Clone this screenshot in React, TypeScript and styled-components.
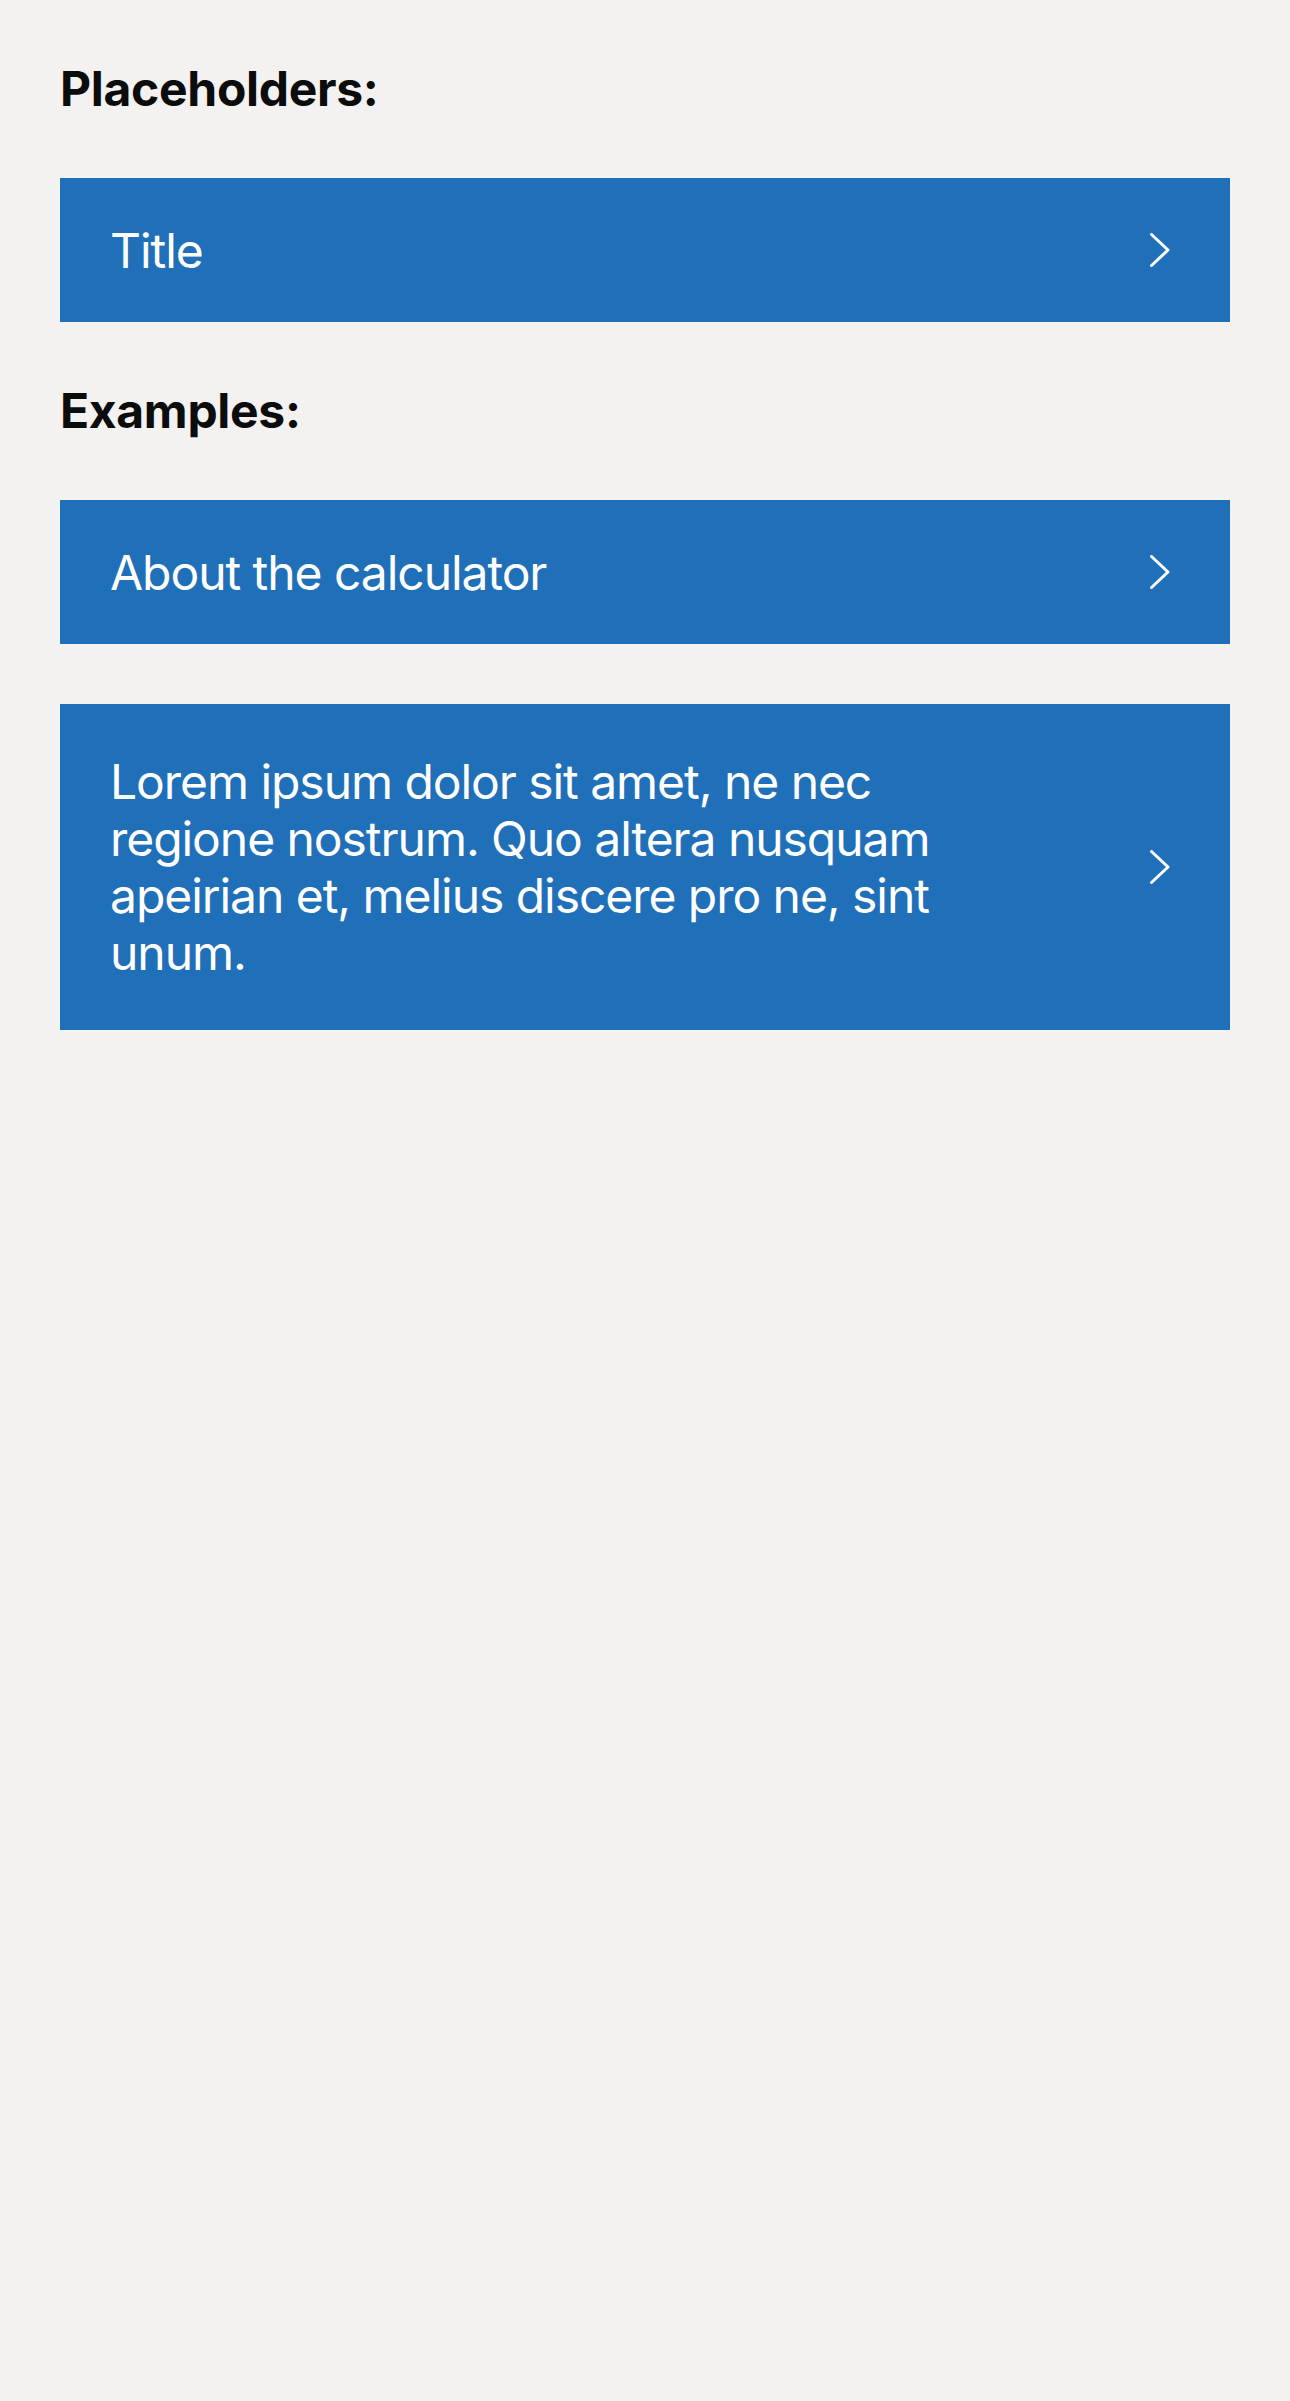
import React from "react";
import styled, { createGlobalStyle } from "styled-components";

const GlobalStyle = createGlobalStyle`
  html, body {
    margin: 0;
    padding: 0;
    background: #f3f2f1;
  }
  body {
    font-family: Inter, "Noto Sans", "Liberation Sans", sans-serif;
    -webkit-font-smoothing: antialiased;
  }
`;

const Page = styled.main`
  display: flex;
  flex-direction: column;
  gap: 60px;
  padding: 60px 60px;
  min-height: 2401px;
  box-sizing: border-box;
  background: #f3f2f1;
`;

const Heading = styled.h2`
  margin: 0;
  font-family: Inter, "Liberation Sans", sans-serif;
  font-size: 48px;
  line-height: 58px;
  font-weight: 700;
  letter-spacing: -0.3px;
  color: #0b0c0c;
`;

const Card = styled.a`
  display: flex;
  align-items: center;
  justify-content: space-between;
  gap: 40px;
  box-sizing: border-box;
  padding: 43.5px 60px 43.5px 50px;
  background: #1f70b8;
  color: #ffffff;
  text-decoration: none;
  cursor: pointer;
`;

const CardText = styled.span<{ $maxWidth?: number; $multiline?: boolean }>`
  flex: 0 1 auto;
  max-width: ${(p) => (p.$maxWidth ? `${p.$maxWidth}px` : "none")};
  padding: ${(p) => (p.$multiline ? "5.5px 0" : "0")};
  font-family: Inter, "Liberation Sans", sans-serif;
  font-size: 48px;
  line-height: 57px;
  font-weight: 400;
  letter-spacing: -1.05px;
`;

const Chevron = styled.svg`
  flex: 0 0 auto;
  width: 20px;
  height: 34px;
  display: block;
`;

const ChevronIcon = () => (
  <Chevron viewBox="0 0 20 34" fill="none" aria-hidden="true">
    <path
      d="M1.5 1.5 L18 17 L1.5 32.5"
      stroke="#ffffff"
      strokeWidth={3}
      strokeLinecap="round"
      strokeLinejoin="round"
    />
  </Chevron>
);

const NavCard: React.FC<{ text: string; maxWidth?: number; multiline?: boolean }> = ({
  text,
  maxWidth,
  multiline,
}) => (
  <Card href="#" onClick={(e) => e.preventDefault()}>
    <CardText $maxWidth={maxWidth} $multiline={multiline}>
      {text}
    </CardText>
    <ChevronIcon />
  </Card>
);

export default function App() {
  return (
    <>
      <GlobalStyle />
      <Page>
        <Heading>Placeholders:</Heading>
        <NavCard text="Title" />
        <Heading>Examples:</Heading>
        <NavCard text="About the calculator" />
        <NavCard
          text="Lorem ipsum dolor sit amet, ne nec regione nostrum. Quo altera nusquam apeirian et, melius discere pro ne, sint unum."
          maxWidth={860}
          multiline
        />
      </Page>
    </>
  );
}
